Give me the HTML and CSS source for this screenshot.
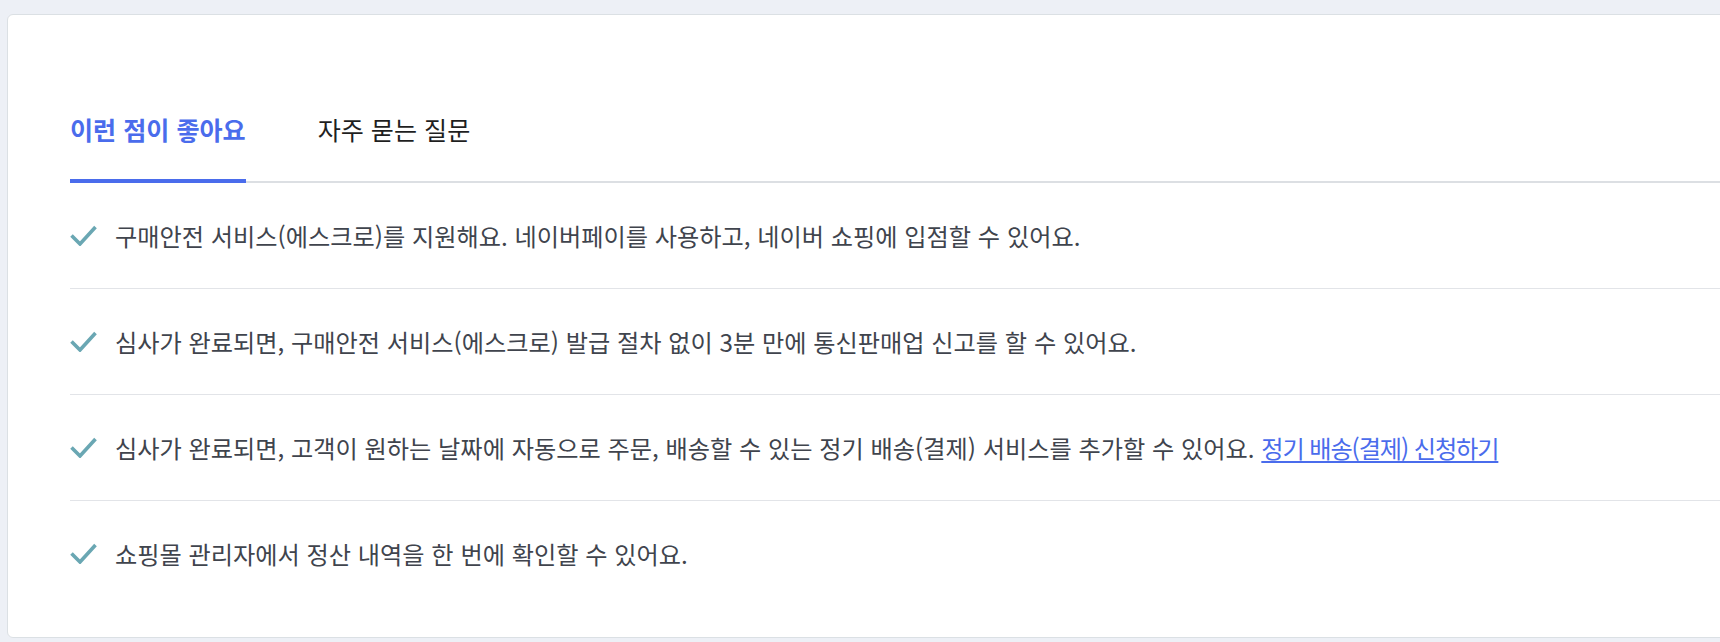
FILE: index.html
```html
<!DOCTYPE html>
<html lang="ko">
<head>
<meta charset="utf-8">
<title>이런 점이 좋아요</title>
<link rel="stylesheet" href="styles.css">
</head>
<body>
<section class="card">
  <nav class="tabs">
    <a class="tab tab--active" href="#">이런 점이 좋아요</a>
    <a class="tab" href="#">자주 묻는 질문</a>
  </nav>
  <ul class="list">
    <li class="item">
      <svg class="check" viewBox="0 0 27 21" width="27" height="21"><polyline points="1.5,10.5 10,19 25.5,2" /></svg>
      <span>구매안전 서비스(에스크로)를 지원해요. 네이버페이를 사용하고, 네이버 쇼핑에 입점할 수 있어요.</span>
    </li>
    <li class="item">
      <svg class="check" viewBox="0 0 27 21" width="27" height="21"><polyline points="1.5,10.5 10,19 25.5,2" /></svg>
      <span>심사가 완료되면, 구매안전 서비스(에스크로) 발급 절차 없이 3분 만에 통신판매업 신고를 할 수 있어요.</span>
    </li>
    <li class="item">
      <svg class="check" viewBox="0 0 27 21" width="27" height="21"><polyline points="1.5,10.5 10,19 25.5,2" /></svg>
      <span>심사가 완료되면, 고객이 원하는 날짜에 자동으로 주문, 배송할 수 있는 정기 배송(결제) 서비스를 추가할 수 있어요. <a class="link" href="#">정기 배송(결제) 신청하기</a></span>
    </li>
    <li class="item">
      <svg class="check" viewBox="0 0 27 21" width="27" height="21"><polyline points="1.5,10.5 10,19 25.5,2" /></svg>
      <span>쇼핑몰 관리자에서 정산 내역을 한 번에 확인할 수 있어요.</span>
    </li>
  </ul>
</section>
</body>
</html>
```
FILE: styles.css
```css
html {
  overflow: hidden;
}
body {
  margin: 0;
  background: #edf0f6;
  font-family: "Noto Sans CJK KR", "Noto Sans", sans-serif;
}
.card {
  box-sizing: border-box;
  width: 1760px;
  margin: 14px 0 0 7px;
  background: #fff;
  border: 1px solid #dbe0e4;
  border-radius: 6px;
  padding: 98px 0 31px 62px;
}
.tabs {
  display: flex;
  border-bottom: 2px solid #dcdfe3;
}
.tab {
  display: block;
  font-size: 25.1px;
  line-height: 32px;
  color: #1f1f1f;
  text-decoration: none;
  padding-bottom: 34px;
  border-bottom: 4px solid transparent;
  margin-bottom: -2px;
  margin-right: 72px;
}
.tab--active {
  color: #4a6cec;
  font-weight: 700;
  border-bottom-color: #4a6cec;
}
.list {
  list-style: none;
  margin: 0;
  padding: 0;
}
.item {
  display: flex;
  align-items: center;
  gap: 18px;
  padding: 36px 0;
  font-size: 24.2px;
  line-height: 33px;
  color: #40444d;
  border-bottom: 1px solid #e2e4e8;
}
.item:last-child {
  border-bottom: none;
}
.check {
  flex: none;
  fill: none;
  stroke: #6aa7b3;
  stroke-width: 3.6;
}
.link {
  color: #4a6cec;
  text-decoration: underline;
  text-underline-offset: 3px;
  letter-spacing: -1.1px;
}
```
